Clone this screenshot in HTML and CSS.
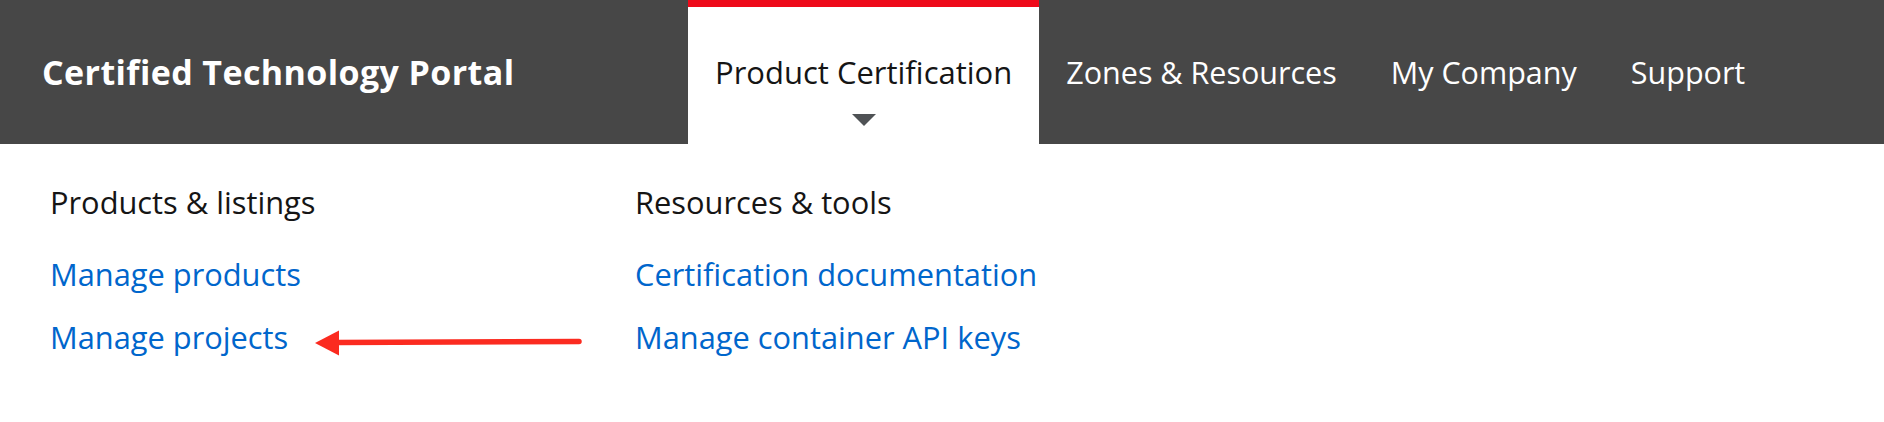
FILE: index.html
```html
<!DOCTYPE html>
<html lang="en">
<head>
<meta charset="utf-8">
<title>Certified Technology Portal</title>
<link rel="stylesheet" href="styles.css">
</head>
<body>
<header class="masthead">
  <div class="brand">Certified Technology Portal</div>
  <nav class="nav">
    <a class="nav-item active" href="#">Product Certification</a>
    <a class="nav-item" href="#">Zones &amp; Resources</a>
    <a class="nav-item" href="#">My Company</a>
    <a class="nav-item" href="#">Support</a>
  </nav>
</header>
<section class="dropdown">
  <div class="col">
    <h3 class="col-title">Products &amp; listings</h3>
    <a class="link" href="#">Manage products</a>
    <a class="link" href="#">Manage projects</a>
  </div>
  <div class="col">
    <h3 class="col-title">Resources &amp; tools</h3>
    <a class="link" href="#">Certification documentation</a>
    <a class="link" href="#">Manage container API keys</a>
  </div>
  <svg class="arrow" width="270" height="30" viewBox="0 0 270 30" aria-hidden="true">
    <line x1="22" y1="14.5" x2="264" y2="13.5" stroke="#fb2b20" stroke-width="5.5" stroke-linecap="round"/>
    <polygon points="0,15 24,2.5 24,27.5" fill="#fb2b20"/>
  </svg>
</section>
</body>
</html>
```
FILE: styles.css
```css
* { box-sizing: border-box; }
html, body { margin: 0; padding: 0; background: #ffffff; }
body { font-family: "Open Sans", "Liberation Sans", sans-serif; }

.masthead {
  display: flex;
  align-items: stretch;
  height: 144px;
  background: #474747;
}
.brand {
  width: 688px;
  padding: 49px 0 0 42px;
  color: #ffffff;
  font-weight: 700;
  font-size: 34px;
  line-height: normal;
  letter-spacing: 0.4px;
  white-space: nowrap;
}
.nav { display: flex; align-items: stretch; }
.nav-item {
  position: relative;
  display: flex;
  align-items: center;
  padding: 0 27px;
  color: #ffffff;
  text-decoration: none;
  font-size: 30.5px;
  white-space: nowrap;
}
.nav-item.active {
  background: #ffffff;
  color: #151515;
  font-size: 31px;
  border-top: 7px solid #ee0a1a;
  padding-bottom: 7px;
}
.nav-item.active::after {
  content: "";
  position: absolute;
  left: 50%;
  top: 107px;
  margin-left: -12px;
  border-left: 12px solid transparent;
  border-right: 12px solid transparent;
  border-top: 12px solid #4f5255;
}

.dropdown {
  position: relative;
  display: flex;
  padding: 38px 0 0 50px;
  height: 278px;
}
.col {
  width: 585px;
  display: flex;
  flex-direction: column;
  align-items: flex-start;
}
.col-title {
  margin: 0 0 32px 0;
  font-weight: 400;
  font-size: 30.8px;
  line-height: 40px;
  color: #151515;
}
.link {
  color: #0066cc;
  text-decoration: none;
  font-size: 30.8px;
  line-height: 40px;
  margin-bottom: 23px;
}
.arrow {
  position: absolute;
  left: 315px;
  top: 184px;
}
```
